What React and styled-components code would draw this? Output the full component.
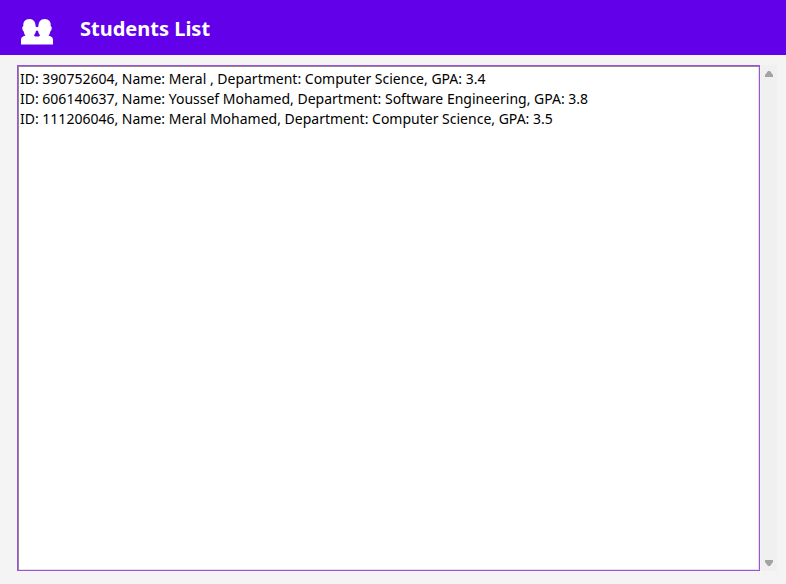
import React from "react";
import styled, { createGlobalStyle } from "styled-components";

const GlobalStyle = createGlobalStyle`
  * { box-sizing: border-box; }
  body {
    margin: 0;
    background: #f4f4f4;
    font-family: "Noto Sans", "Open Sans", sans-serif;
  }
`;

const Page = styled.div`
  display: flex;
  flex-direction: column;
  min-height: 100vh;
`;

const Header = styled.header`
  display: flex;
  align-items: center;
  gap: 27px;
  height: 55px;
  padding: 2px 21px 0;
  background: #6200ea;
  color: #fff;
`;

const PeopleIcon = styled.svg`
  display: block;
  width: 32px;
  height: 26px;
  margin-top: 6px;
  fill: currentColor;
`;

const Title = styled.h1`
  margin: 0;
  font-size: 20px;
  line-height: 28px;
  font-weight: 700;
`;

const Main = styled.main`
  flex: 1;
  display: flex;
  gap: 1px;
  padding: 10px 9px 13px 17px;
`;

const ListBox = styled.ul`
  flex: 1;
  min-width: 0;
  margin: 0;
  padding: 3px 1px;
  list-style: none;
  background: #fff;
  border: 1px solid #a04ee8;
  box-shadow: inset 1px 1px #8c8c8c, inset -1px -1px #e3e3e3;
`;

const Row = styled.li`
  padding-left: 1px;
  font-size: 14px;
  line-height: 20px;
  color: #000;
`;

const ScrollBar = styled.div`
  display: flex;
  flex-direction: column;
  justify-content: space-between;
  width: 16px;
  background: #f0f0f0;
`;

const ScrollButton = styled.button`
  display: flex;
  align-items: center;
  justify-content: center;
  width: 16px;
  height: 17px;
  padding: 0;
  border: 0;
  background: none;
  color: #a3a3a3;
`;

const Arrow = styled.svg`
  width: 8px;
  height: 6px;
  fill: currentColor;
`;

const students = [
  { id: "390752604", name: "Meral ", department: "Computer Science", gpa: "3.4" },
  { id: "606140637", name: "Youssef Mohamed", department: "Software Engineering", gpa: "3.8" },
  { id: "111206046", name: "Meral Mohamed", department: "Computer Science", gpa: "3.5" },
];

export default function App() {
  return (
    <Page>
      <GlobalStyle />
      <Header>
        <PeopleIcon viewBox="0 0 32 26" aria-hidden="true">
          <path d="M0 25.500V20.500q0-2.500 2.500-3.200L4.500 16.500Q3 15 2.700 12.500Q1.200 11.500 1.200 8.500Q1.200 7.500 2.200 7.500Q1.600 0 8.500 0Q14.500 0 14.800 7.800Q16 8.500 17.200 7.800Q17.500 0 23.500 0Q30.400 0 29.800 7.500Q30.800 7.500 30.800 8.500Q30.800 11.500 29.300 12.500Q29 15 27.500 16.500L29.500 17.300Q32 18 32 20.500V25.500ZM15 11.800Q14.700 14.500 13 16.300L14 17.500H18L19 16.300Q17.300 14.500 17 11.800Z" fillRule="evenodd" />
        </PeopleIcon>
        <Title>Students List</Title>
      </Header>
      <Main>
        <ListBox role="listbox" aria-label="Students">
          {students.map((s) => (
            <Row key={s.id} role="option" aria-selected="false">
              {`ID: ${s.id}, Name: ${s.name}, Department: ${s.department}, GPA: ${s.gpa}`}
            </Row>
          ))}
        </ListBox>
        <ScrollBar>
          <ScrollButton type="button" aria-label="Scroll up">
            <Arrow viewBox="0 0 8 6"><path d="M3 0h2l3 4v2H0V4Z" /></Arrow>
          </ScrollButton>
          <ScrollButton type="button" aria-label="Scroll down">
            <Arrow viewBox="0 0 8 6"><path d="M0 0h8v2L5 6H3L0 2Z" /></Arrow>
          </ScrollButton>
        </ScrollBar>
      </Main>
    </Page>
  );
}
